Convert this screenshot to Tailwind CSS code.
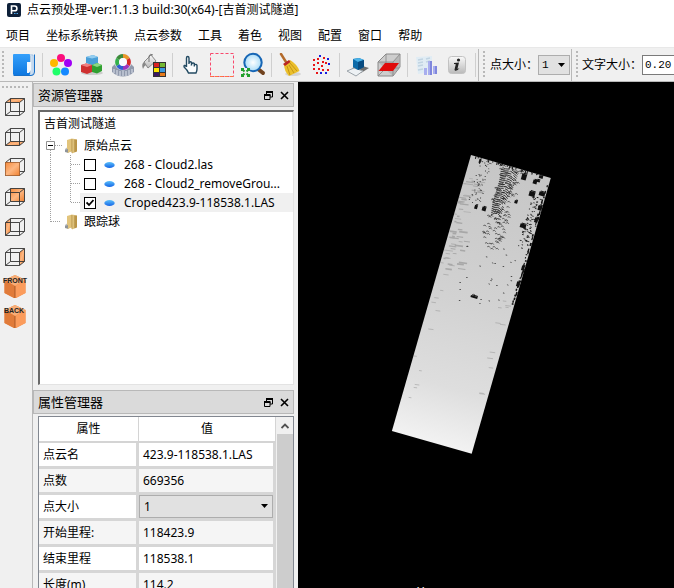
<!DOCTYPE html>
<html lang="zh-CN">
<head>
<meta charset="utf-8">
<title>点云预处理</title>
<script src="https://cdn.jsdelivr.net/npm/@tailwindcss/browser@4"></script>
</head>
<body class="flex h-screen flex-col overflow-hidden bg-white font-['Noto_Sans','Noto_Sans_CJK_SC',sans-serif] text-[12px] leading-4 text-black">
<svg class="absolute size-0" aria-hidden="true">
  <defs>
    <linearGradient id="orange" x1="0" y1="0" x2="1" y2="1"><stop offset="0" stop-color="#f58a3c"/><stop offset=".5" stop-color="#fdb782"/><stop offset="1" stop-color="#f08232"/></linearGradient>
    <linearGradient id="gold" x1="0" y1="0" x2="1" y2="0"><stop offset="0" stop-color="#f0d795"/><stop offset="1" stop-color="#b58d3c"/></linearGradient>
    <linearGradient id="blob" x1="0" y1="0" x2="0" y2="1"><stop offset="0" stop-color="#5cc0fa"/><stop offset="1" stop-color="#1464e6"/></linearGradient>
    <linearGradient id="book" x1="0" y1="0" x2="0" y2="1"><stop offset="0" stop-color="#35a0fb"/><stop offset="1" stop-color="#0f78e0"/></linearGradient>
    <linearGradient id="metal" x1="0" y1="0" x2="0" y2="1"><stop offset="0" stop-color="#fafafa"/><stop offset="1" stop-color="#b9b9b9"/></linearGradient>
    <radialGradient id="lens"><stop offset="0" stop-color="#ffffff"/><stop offset="1" stop-color="#a9dcf8"/></radialGradient>
    <linearGradient id="cloud" x1="0" y1="0" x2="0" y2="1"><stop offset="0" stop-color="#c6c6c6"/><stop offset=".5" stop-color="#d2d2d2"/><stop offset=".8" stop-color="#dedede"/><stop offset="1" stop-color="#f2f2f2"/></linearGradient>
    <symbol id="wire" viewBox="0 0 20 18"><path d="M.5 4.500H14.500V17.500H.5ZM5.500.5H19.500V13.500H5.500ZM.5 4.500L5.500.5M14.500 4.500L19.500.5M14.500 17.500L19.500 13.500M.5 17.500L5.500 13.500" fill="none" stroke="#333" stroke-width=".9"/></symbol>
    <symbol id="folder" viewBox="0 0 15 16"><path d="M1 11L5 8V15L1 14Z" fill="#b9bcc0"/><path d="M3 2L8 .5V13.500L3 15Z" fill="#e2c47c"/><path d="M8 .5L13 1.500V13.500L8 15.500Z" fill="url(#gold)"/><path d="M8 1V15M11 2V14" stroke="#a57f33" stroke-width=".7"/><path d="M1 12L4 11V14.500L1 14Z" fill="#8f9499"/></symbol>
    <symbol id="point" viewBox="0 0 11 8"><ellipse cx="5.500" cy="4" rx="5.200" ry="3" fill="url(#blob)"/></symbol>
    <symbol id="cube" viewBox="0 0 22 23"><path d="M11 0L21.500 5V18L11 23.500L.5 18V5Z" fill="#ef8744"/><path d="M11 0L21.500 5L11 11L.5 5Z" fill="#f7ae78"/><path d="M.5 5L11 11V23.500L.5 18Z" fill="#e07b3a"/><path d="M21.500 5L11 11V23.500L21.500 18Z" fill="#fb9c5c"/><path d="M11 11V23" stroke="#9c4e1e" stroke-width=".8"/></symbol>
    <symbol id="restore" viewBox="0 0 9 9"><path d="M2.500 3V1H8.500V6H6M.5 4H6V8.500H.5Z" fill="none" stroke="#000"/><path d="M2 1H9M0 4H6.500" stroke="#000" stroke-width="2"/></symbol>
    <symbol id="close" viewBox="0 0 9 9"><path d="M1 1L8 8M8 1L1 8" stroke="#000" stroke-width="1.600"/></symbol>
  </defs>
</svg>

<header class="flex h-6 shrink-0 items-center gap-[6px] px-[7px] pb-1">
  <svg class="size-[14px]" viewBox="0 0 14 14"><rect width="14" height="14" rx="2" fill="#0e2038"/><path d="M4.500 11V3H7.500A2.200 2.200 0 0 1 7.500 7.800H5" fill="none" stroke="#fff" stroke-width="1.600"/><path d="M7 10.500H11" stroke="#4aa3e8" stroke-width="1.200" stroke-dasharray="1.500 1"/></svg>
  <h1>点云预处理-ver:1.1.3 build:30(x64)-[吉首测试隧道]</h1>
</header>

<nav class="flex h-6 shrink-0 items-center gap-4 border-b border-[#e8e8e8] px-[6px] pt-px">
  <button>项目</button><button>坐标系统转换</button><button>点云参数</button><button>工具</button><button>着色</button><button>视图</button><button>配置</button><button>窗口</button><button>帮助</button>
</nav>

<div class="flex h-[34px] shrink-0 items-center overflow-hidden border-b border-[#b8b8b8] bg-[#f0f0f0] pt-px" role="toolbar">
  <div class="ml-[2px] mr-1 h-7 w-[2px] shrink-0 bg-[repeating-linear-gradient(#b8b8b8_0_2px,transparent_2px_4px)]"></div>
  <button class="flex w-[31px] shrink-0 justify-center" aria-label="打开项目"><svg width="24" height="24" viewBox="0 0 24 24"><path d="M14 2H21V22H14Z" fill="#e9f2fb" stroke="#9ac0e6"/><path d="M18.500 3V21" stroke="#b7cde2" stroke-width="2"/><rect x="1" y="1" width="17" height="21" rx="1" fill="url(#book)"/><path d="M15 9H19V17L17 20H15Z" fill="#f4f9ff"/><path d="M1.500 22.500H19Q22.500 22.500 22.500 19V1.500" fill="none" stroke="#1870c8"/></svg></button>
  <div class="flex w-[6px] shrink-0 justify-center"><i class="h-6 w-px bg-[#cfcfcf]"></i></div>
  <button class="flex w-[31px] shrink-0 justify-center" aria-label="颜色"><svg width="24" height="24" viewBox="0 0 24 24"><circle cx="12" cy="5" r="4" fill="#fb0f7d"/><circle cx="19" cy="10" r="4" fill="#a000f5"/><circle cx="16" cy="18.500" r="4" fill="#1488ff"/><circle cx="7.500" cy="18.500" r="4" fill="#1fff6a"/><circle cx="5" cy="10" r="4" fill="#ffb800"/></svg></button>
  <button class="flex w-[31px] shrink-0 justify-center" aria-label="模型"><svg width="24" height="24" viewBox="0 0 24 24"><ellipse cx="12" cy="20" rx="11" ry="2" fill="#ccc"/><path d="M6 4L13 2L18 4V11L13 12.500L6 10Z" fill="#4a9fd8"/><path d="M6 4L13 2L18 4L12 5.500Z" fill="#93cdf0"/><path d="M1 12L6 10.500L12 12V19L7 21L1 19Z" fill="#cf3030"/><path d="M1 12L6 10.500L12 12L7 14Z" fill="#f08080"/><path d="M12 12L17 10L22 12V18L17 20.500L12 19Z" fill="#31a030"/><path d="M12 12L17 10L22 12L17 14Z" fill="#8bd884"/></svg></button>
  <button class="flex w-[31px] shrink-0 justify-center" aria-label="色环"><svg width="24" height="24" viewBox="0 0 24 24"><path d="M1 14L4 11H20L23 14V19Q18 23.500 12 23.500T1 19Z" fill="#9099ac"/><path d="M3 16V20M6 17V22M9 18V23M12 18V23M15 18V23M18 17V22M21 16V20" stroke="#dfe4ee"/><circle cx="12" cy="9" r="8.500" fill="#e6eaf2"/><g fill="none" stroke-width="4"><path d="M12 3A6 6 0 0 1 17 6" stroke="#e9972a"/><path d="M17 6A6 6 0 0 1 17 12" stroke="#d72626"/><path d="M17 12A6 6 0 0 1 12 15" stroke="#9b36c0"/><path d="M12 15A6 6 0 0 1 7 12" stroke="#2e5ed0"/><path d="M7 12A6 6 0 0 1 7 6" stroke="#33b04a"/><path d="M7 6A6 6 0 0 1 12 3" stroke="#3c8a38"/></g><circle cx="12" cy="9" r="4" fill="#f9fbff"/></svg></button>
  <button class="flex w-[31px] shrink-0 justify-center" aria-label="填充"><svg width="26" height="24" viewBox="0 0 26 24"><path d="M3 9L10 2L15 8L7 15Z" fill="url(#metal)" stroke="#888"/><path d="M8 9V3Q9 0 12 2" fill="none" stroke="#777"/><path d="M3 9Q0 11 2 16Q3 13 5 12Z" fill="#888"/><path d="M12 9H25V24H12Z" fill="#333"/><path d="M13 10H18V14H13Z" fill="#d82222"/><path d="M19 10H24V14H19Z" fill="#75b833"/><path d="M13 15H18V19H13Z" fill="#ffe600"/><path d="M19 15H24V19H19Z" fill="#3b9ae0"/><path d="M13 20H18V23H13Z" fill="#3c1864"/><path d="M19 20H24V23H19Z" fill="#e57a1c"/></svg></button>
  <div class="flex w-[6px] shrink-0 justify-center"><i class="h-6 w-px bg-[#cfcfcf]"></i></div>
  <button class="flex w-[31px] shrink-0 justify-center" aria-label="选择"><svg width="20" height="22" viewBox="0 0 20 22"><path d="M5.500 13V4Q5.500 2.500 6.700 2.500T8 4V10V8.500Q9.500 7 10.500 8.500V10Q12 8.200 13.300 9.500V11Q15.500 9.500 16 11.500V15Q16 17 15 19H7.500Q6.500 16 3.500 13.500Q2.500 12 3.500 11.500T5.500 13M10.500 10V11.500M13.300 11V12.500" fill="#fafcfd" stroke="#234a62" stroke-width="1.400"/></svg></button>
  <button class="flex w-[31px] shrink-0 justify-center" aria-label="框选"><svg width="24" height="24" viewBox="0 0 24 24"><rect x=".5" y=".5" width="23" height="23" fill="none" stroke="#f8486c" stroke-dasharray="3 2"/><path d="M0 23.500H24" stroke="#ff7740" stroke-dasharray="3 2"/></svg></button>
  <button class="flex w-[31px] shrink-0 justify-center" aria-label="缩放"><svg width="26" height="26" viewBox="0 0 26 26"><path d="M18 17L23 21" stroke="#71431f" stroke-width="4" stroke-linecap="round"/><circle cx="13" cy="10.500" r="8.700" fill="url(#lens)" stroke="#1766b5" stroke-width="2"/><path d="M1 16H10V25H1Z" fill="#f0f0f0"/><g stroke="#21a02c" stroke-width="2" fill="none"><path d="M2 19V17H4M7 17H9V19M9 22V24H7M4 24H2V22M3 18L4.500 19.500M8 18L6.500 19.500M3 23L4.500 21.500M8 23L6.500 21.500"/></g></svg></button>
  <div class="flex w-[6px] shrink-0 justify-center"><i class="h-6 w-px bg-[#cfcfcf]"></i></div>
  <button class="flex w-[31px] shrink-0 justify-center" aria-label="清除"><svg width="24" height="24" viewBox="0 0 24 24"><ellipse cx="15" cy="21" rx="8" ry="2" fill="#d4d4d4"/><path d="M3 1L8 9" stroke="#b36a2b" stroke-width="2.500" stroke-linecap="round"/><path d="M6 11L12 7Q19 11 21.500 18L11 23Q6 18 6 11Z" fill="#ebbf2b"/><path d="M9 13L12 22M11 12L16 20M12 10L19 18" stroke="#b98a10" stroke-width=".8"/><path d="M5 11L11 7L12.500 9L7 13Z" fill="#b92525"/></svg></button>
  <button class="flex w-[31px] shrink-0 justify-center" aria-label="采样"><svg width="20" height="20" viewBox="0 0 20 20"><path d="M2 4H4V6H2ZM2 9H4V11H2ZM6 7H8V9H6ZM14 7H16V9H14ZM10 10H12V12H10ZM2 13H4V15H2ZM7 13H9V15H7ZM16 14H18V16H16ZM5 17H7V19H5ZM11 14H13V16H11ZM12 2H14V4H12ZM6 3H8V5H6ZM11 6H13V8H11Z" fill="#e81416"/><path d="M16 3H18V5H16ZM8 0H10V2H8ZM17 8H19V10H17ZM9 17H11V19H9ZM14 17H16V19H14Z" fill="#161be0"/></svg></button>
  <div class="flex w-[6px] shrink-0 justify-center"><i class="h-6 w-px bg-[#cfcfcf]"></i></div>
  <button class="flex w-[31px] shrink-0 justify-center" aria-label="投影"><svg width="24" height="24" viewBox="0 0 24 24"><path d="M10 11L23 15L15 20L5 17Z" fill="#444" opacity=".75"/><path d="M1 18L8 15L17 18L10 23Z" fill="#edf1f4" stroke="#9ca4aa"/><path d="M7 6L13 5L18 7V14L12 17L7 14Z" fill="#0d6aa8"/><path d="M7 6L13 5L18 7L12 9Z" fill="#4ab2e8"/><path d="M12 9L18 7V14L12 17Z" fill="#084b80"/></svg></button>
  <button class="flex w-[31px] shrink-0 justify-center" aria-label="切片"><svg width="24" height="24" viewBox="0 0 24 24"><path d="M1 9L9 1H23V14L16 23H1Z" fill="#cdcdcd" stroke="#8a8a8a"/><path d="M1 9H16L23 1V14L16 23Z" fill="#a8a8a8" opacity=".6"/><path d="M1 9H16V23M16 9L23 1M1 23L9 15V1M9 15H22" fill="none" stroke="#858585" stroke-width=".8"/><path d="M1.500 18L8 10H22L16 18Z" fill="#e00b0b"/></svg></button>
  <div class="flex w-[6px] shrink-0 justify-center"><i class="h-6 w-px bg-[#cfcfcf]"></i></div>
  <button class="flex w-[31px] shrink-0 justify-center" aria-label="统计"><svg width="24" height="24" viewBox="0 0 24 24"><path d="M2 4L18 3L18 19L4 21Z" fill="#e0ecf4"/><path d="M4 7L9 6M4 10L9 9M4 13L9 12M4 17L9 16M12 6L16 5M12 9L16 8" stroke="#c0d4e2" stroke-width="1.500"/><path d="M10 15H13V22H10ZM14 8H18V22H14ZM19 13H22V21H19Z" fill="#a9aeee"/><path d="M16 8H18V22H16ZM21 13H23V21H21Z" fill="#8087dc"/></svg></button>
  <button class="flex w-[31px] shrink-0 justify-center" aria-label="信息"><svg width="18" height="18" viewBox="0 0 18 18"><rect x=".5" y=".5" width="17" height="17" rx="3" fill="url(#metal)" stroke="#c2c2c2"/><path d="M6 7L11 6.500L9.500 12.500Q10 13.300 11.500 12Q9.500 15.200 7.200 14.700Q6 14.200 7 11.500L7.800 8.200L6 8Z" fill="#222"/><circle cx="10.500" cy="4" r="1.600" fill="#222"/></svg></button>
  <div class="flex w-[6px] shrink-0 justify-center"><i class="h-6 w-px bg-[#cfcfcf]"></i></div>
  <div class="flex h-full shrink-0 items-center border-l border-[#b8b8b8] pl-1">
    <div class="h-7 w-[2px] bg-[repeating-linear-gradient(#b8b8b8_0_2px,transparent_2px_4px)]"></div>
    <label for="point-size" class="ml-[5px] w-12">点大小：</label>
    <div class="relative h-5 w-8">
      <select id="point-size" class="size-full appearance-none border border-[#adadad] bg-[#e1e1e1] pl-[3px] font-['Liberation_Mono',monospace] text-[11px] leading-4"><option>1</option></select>
      <svg class="pointer-events-none absolute right-[5px] top-2" width="7" height="4"><path d="M0 0H7L3.500 4Z"/></svg>
    </div>
  </div>
  <div class="ml-px flex h-full min-w-0 flex-1 items-center border-l border-[#b8b8b8] pl-1">
    <div class="h-7 w-[2px] shrink-0 bg-[repeating-linear-gradient(#b8b8b8_0_2px,transparent_2px_4px)]"></div>
    <label for="text-size" class="ml-1 w-[60px] shrink-0">文字大小：</label>
    <input id="text-size" value="0.20" class="h-5 w-12 shrink-0 border border-[#7a7a7a] bg-white pl-[2px] font-['Liberation_Mono',monospace] text-[11px]">
  </div>
</div>

<main class="flex min-h-0 flex-1">
  <aside class="flex w-[33px] shrink-0 flex-col border-r border-[#b8b8b8] bg-[#f0f0f0] pt-1" role="toolbar">
    <div class="ml-[2px] h-[2px] w-[26px] bg-[repeating-linear-gradient(90deg,#b8b8b8_0_2px,transparent_2px_4px)]"></div>
    <div class="mt-1 flex w-[30px] flex-col">
      <button class="flex h-[30px] items-center justify-center" aria-label="顶视图"><svg width="20" height="18"><path d="M.5 4.500L5.500.5H19.500L14.500 4.500Z" fill="url(#orange)"/><use href="#wire"/></svg></button>
      <button class="flex h-[30px] items-center justify-center" aria-label="底视图"><svg width="20" height="18"><path d="M.5 17.500L5.500 13.500H19.500L14.500 17.500Z" fill="url(#orange)"/><use href="#wire"/></svg></button>
      <button class="flex h-[30px] items-center justify-center" aria-label="前视图"><svg width="20" height="18"><use href="#wire"/><path d="M.5 4.500H14.500V17.500H.5Z" fill="url(#orange)" stroke="#b8652a" stroke-width=".6"/></svg></button>
      <button class="flex h-[30px] items-center justify-center" aria-label="后视图"><svg width="20" height="18"><path d="M5.500.5H19.500V13.500H5.500Z" fill="url(#orange)"/><use href="#wire"/></svg></button>
      <button class="flex h-[30px] items-center justify-center" aria-label="左视图"><svg width="20" height="18"><path d="M.5 4.500L5.500.5V13.500L.5 17.500Z" fill="url(#orange)"/><use href="#wire"/></svg></button>
      <button class="flex h-[30px] items-center justify-center" aria-label="右视图"><svg width="20" height="18"><path d="M14.500 4.500L19.500.5V13.500L14.500 17.500Z" fill="url(#orange)"/><use href="#wire"/></svg></button>
      <button class="flex h-[30px] items-center justify-center"><svg width="26" height="24" viewBox="0 0 26 24"><use href="#cube" x="2" width="22" height="23"/><text x="13" y="8" text-anchor="middle" font-family="Liberation Sans, sans-serif" font-size="7" font-weight="700" fill="#222">FRONT</text></svg></button>
      <button class="flex h-[30px] items-center justify-center"><svg width="26" height="24" viewBox="0 0 26 24"><use href="#cube" x="2" width="22" height="23"/><text x="12" y="8" text-anchor="middle" font-family="Liberation Sans, sans-serif" font-size="7" font-weight="700" fill="#222">BACK</text></svg></button>
    </div>
  </aside>

  <div class="flex w-[265px] shrink-0 flex-col gap-[5px] bg-[#f0f0f0] pr-1 pt-px">
    <section class="flex shrink-0 flex-col">
      <div class="flex h-6 items-center border border-[#b8b8b8] bg-[#dadada] pl-1 pr-1">
        <h2 class="flex-1 text-[13px]">资源管理器</h2>
        <button class="mr-[7px]" aria-label="浮动"><svg width="9" height="9"><use href="#restore"/></svg></button>
        <button aria-label="关闭"><svg width="9" height="9"><use href="#close"/></svg></button>
      </div>
      <div class="ml-[5px] mt-[3px] h-[275px] border-l-2 border-t-2 border-b border-r border-b-[#e3e3e3] border-l-[#696969] border-r-[#e3e3e3] border-t-[#696969] bg-white">
        <div class="flex h-6 items-center border-r border-[#e3e3e3] pl-1">吉首测试隧道</div>
        <ul>
          <li class="flex h-[19px] items-center">
            <svg class="shrink-0" width="24" height="19" fill="none"><path d="M10.500 1V5M10.500 14V19M15 9.500H22" stroke="#a0a0a0" stroke-dasharray="1 1"/><path d="M6.500 5.500H14.500V13.500H6.500Z" stroke="#919191"/><path d="M8 9.500H13" stroke="#000"/></svg>
            <svg width="15" height="16"><use href="#folder"/></svg><span class="ml-[5px]">原始点云</span>
          </li>
          <li class="flex h-[19px]">
            <svg class="shrink-0" width="40" height="19" fill="none"><path d="M10.500 0V19M30.500 0V19M31 9.500H40" stroke="#a0a0a0" stroke-dasharray="1 1"/></svg>
            <label class="flex min-w-0 flex-1 items-center pl-1 pr-2"><input type="checkbox" class="size-3 shrink-0 appearance-none border border-black bg-white"><svg class="ml-[8px] shrink-0" width="11" height="8"><use href="#point"/></svg><span class="ml-[9px] truncate">268 - Cloud2.las</span></label>
          </li>
          <li class="flex h-[19px]">
            <svg class="shrink-0" width="40" height="19" fill="none"><path d="M10.500 1V19M30.500 1V19M31 9.500H40" stroke="#a0a0a0" stroke-dasharray="1 1"/></svg>
            <label class="flex min-w-0 flex-1 items-center pl-1"><input type="checkbox" class="size-3 shrink-0 appearance-none border border-black bg-white"><svg class="ml-[8px] shrink-0" width="11" height="8"><use href="#point"/></svg><span class="ml-[9px] whitespace-nowrap">268 - Cloud2_removeGrou...</span></label>
          </li>
          <li class="flex h-[19px]">
            <svg class="shrink-0" width="40" height="19" fill="none"><path d="M10.500 0V19M30.500 0V10M31 9.500H40" stroke="#a0a0a0" stroke-dasharray="1 1"/></svg>
            <label class="relative flex min-w-0 flex-1 items-center bg-[#f0f0f0] pl-1"><input type="checkbox" checked class="size-3 shrink-0 appearance-none border border-black bg-white"><svg class="pointer-events-none absolute left-[6px] top-[6px]" width="8" height="8"><path d="M.5 3.500L3 6L7.500 1" fill="none" stroke="#000" stroke-width="1.800"/></svg><svg class="ml-[8px] shrink-0" width="11" height="8"><use href="#point"/></svg><span class="ml-[9px] truncate">Croped423.9-118538.1.LAS</span></label>
          </li>
          <li class="flex h-[19px] items-center">
            <svg class="shrink-0" width="24" height="19" fill="none"><path d="M10.500 1V10M11 9.500H20" stroke="#a0a0a0" stroke-dasharray="1 1"/></svg>
            <svg width="15" height="16"><use href="#folder"/></svg><span class="ml-[5px]">跟踪球</span>
          </li>
        </ul>
      </div>
    </section>

    <section class="flex min-h-0 flex-1 flex-col">
      <div class="flex h-6 shrink-0 items-center border border-[#b8b8b8] bg-[#dadada] pl-1 pr-1">
        <h2 class="flex-1 text-[13px]">属性管理器</h2>
        <button class="mr-[7px]" aria-label="浮动"><svg width="9" height="9"><use href="#restore"/></svg></button>
        <button aria-label="关闭"><svg width="9" height="9"><use href="#close"/></svg></button>
      </div>
      <div class="ml-[5px] mt-[2px] flex min-h-0 flex-1 overflow-hidden border-x border-t border-[#828790] bg-white">
        <table class="w-[237px] shrink-0 table-fixed border-separate border-spacing-0 self-start text-left">
          <thead><tr class="h-[26px]"><th class="w-[100px] border-b-2 border-r border-[#d4d4d4] text-center font-normal">属性</th><th class="border-b-2 border-r border-[#d4d4d4] text-center font-normal">值</th></tr></thead>
          <tbody>
            <tr class="h-[26px]"><td class="border-b-[3px] border-r-[3px] border-[#d6d6d6] pl-1">点云名</td><td class="border-b-[3px] border-r-[3px] border-[#d6d6d6] pl-1">423.9-118538.1.LAS</td></tr>
            <tr class="h-[26px] bg-[#f5f5f5]"><td class="border-b-[3px] border-r-[3px] border-[#d6d6d6] pl-1">点数</td><td class="border-b-[3px] border-r-[3px] border-[#d6d6d6] pl-1">669356</td></tr>
            <tr class="h-[26px]"><td class="border-b-[3px] border-r-[3px] border-[#d6d6d6] pl-1"><label for="row-size">点大小</label></td><td class="border-b-[3px] border-r-[3px] border-[#d6d6d6] p-0"><div class="relative h-[23px]"><select id="row-size" class="size-full appearance-none border border-[#adadad] bg-[#e1e1e1] pl-1 leading-4"><option>1</option></select><svg class="pointer-events-none absolute right-[5px] top-[9px]" width="7" height="4"><path d="M0 0H7L3.500 4Z"/></svg></div></td></tr>
            <tr class="h-[26px] bg-[#f5f5f5]"><td class="border-b-[3px] border-r-[3px] border-[#d6d6d6] pl-1">开始里程:</td><td class="border-b-[3px] border-r-[3px] border-[#d6d6d6] pl-1">118423.9</td></tr>
            <tr class="h-[26px]"><td class="border-b-[3px] border-r-[3px] border-[#d6d6d6] pl-1">结束里程</td><td class="border-b-[3px] border-r-[3px] border-[#d6d6d6] pl-1">118538.1</td></tr>
            <tr class="h-[26px] bg-[#f5f5f5]"><td class="border-b-[3px] border-r-[3px] border-[#d6d6d6] pl-1">长度(m)</td><td class="border-b-[3px] border-r-[3px] border-[#d6d6d6] pl-1">114.2</td></tr>
          </tbody>
        </table>
        <div class="flex flex-1 flex-col bg-[#f0f0f0] pl-px">
          <button class="flex h-[17px] items-center justify-center" aria-label="向上滚动"><svg width="8" height="6"><path d="M.5 5L4 1.500L7.500 5" fill="none" stroke="#505050" stroke-width="1.800"/></svg></button>
          <div class="flex-1 bg-[#cdcdcd]"></div>
        </div>
      </div>
    </section>
  </div>

  <section class="min-w-0 flex-1 bg-black">
    <svg class="size-full" id="view" role="img" aria-label="点云视图">
      <g transform="translate(173 73) rotate(16)">
        <rect width="83" height="287" fill="url(#cloud)"/>
        <g id="smudges" stroke="#8f8f8f" opacity=".6"></g>
        <g id="ripples" fill="none" stroke="#222" stroke-width=".8"></g>
        <g id="specks" fill="#111"></g>
      </g>
      <text x="119" y="513" fill="#fff" font-family="Liberation Sans, sans-serif" font-size="11">Y</text>
    </svg>
  </section>
</main>
<script>
  // Seeded generator keeps the scan texture the same on every load.
  let seed = 7;
  const rnd = () => (seed = (seed * 16807) % 2147483647) / 2147483647;
  const add = (id, tag, attrs) => {
    const el = document.createElementNS('http://www.w3.org/2000/svg', tag);
    for (const k in attrs) el.setAttribute(k, attrs[k]);
    document.getElementById(id).appendChild(el);
  };
  const line = (u, v, w, h) => add('smudges', 'path', { d: `M${u} ${v}l${w} ${-w * 0.15}`, 'stroke-width': h });
  for (let i = 0; i < 55; i++) line(rnd() * rnd() * 22, 22 + rnd() * 95, 2 + rnd() * 7, 0.5 + rnd() * 1.3);
  for (let i = 0; i < 22; i++) line(rnd() < 0.6 ? rnd() * 10 : 68 + rnd() * 8, 120 + rnd() * 145, 2 + rnd() * 4, 0.7);
  // Ripple pattern along the scanner track
  for (let v = 3; v < 50; v += 2) {
    const w = 9 - v * 0.08, c = 41 + Math.sin(v / 8);
    add('ripples', 'path', { d: `M${c - w} ${v + 3}q${w} -6 ${w * 2} 0`, 'stroke-dasharray': `${5 + rnd() * 8} ${1 + rnd() * 2}` });
  }
  for (let i = 0; i < 130; i++) {
    const v = rnd() * 84, u = 42 + (rnd() - 0.5) * 22;
    add('ripples', 'path', { d: `M${u} ${v + 1}q1.500 -2 3 0`, opacity: 0.7 });
  }
  const dot = (u, v, w, h) => add('specks', 'rect', { x: u, y: v, width: w, height: h });
  for (let i = 0; i < 55; i++) dot(10 + rnd() * 12, rnd() * 45, 1, 0.7);
  for (let i = 0; i < 75; i++) dot(70 + rnd() * 9, 22 + rnd() * 55, 1 + rnd(), 0.8);
  for (let v = 8; v < 135; v += 3) if (rnd() < 0.8) dot(80 + rnd() * 1.500, v, 1 + rnd(), 1 + rnd() * 3);
  for (let i = 0; i < 30; i++) dot(rnd() * 70, 0, 1, rnd() * 3);
  for (let i = 0; i < 28; i++) dot(20 + rnd() * 58, 80 + rnd() * 65, 1.500, 0.6);
  // Holes in the scan: x, y, width and height, measured from the scan's top-left corner
  [[53,22,5,6],[64,27,4,4],[61,39,6,5],[71,39,6,4],[69,53,4,5],[5,52,3,4],[13,54,4,4],[70,22,4,3],[45,47,3,3],[3,142,7,2],[47,129,3,5],[52,113,3,5],[52,71,6,4],[9,6,2,4],[67,26,4,2],[65,65,3,5]].forEach(([x, y, w, h]) => {
    const u = x * 0.961 + y * 0.276, v = y * 0.961 - x * 0.276;
    dot(u - w / 2, v - h / 2, w, h);
    dot(u - w / 2 + 1, v - h / 2 - 1, w - 1, 1);
  });
</script>
</body>
</html>
